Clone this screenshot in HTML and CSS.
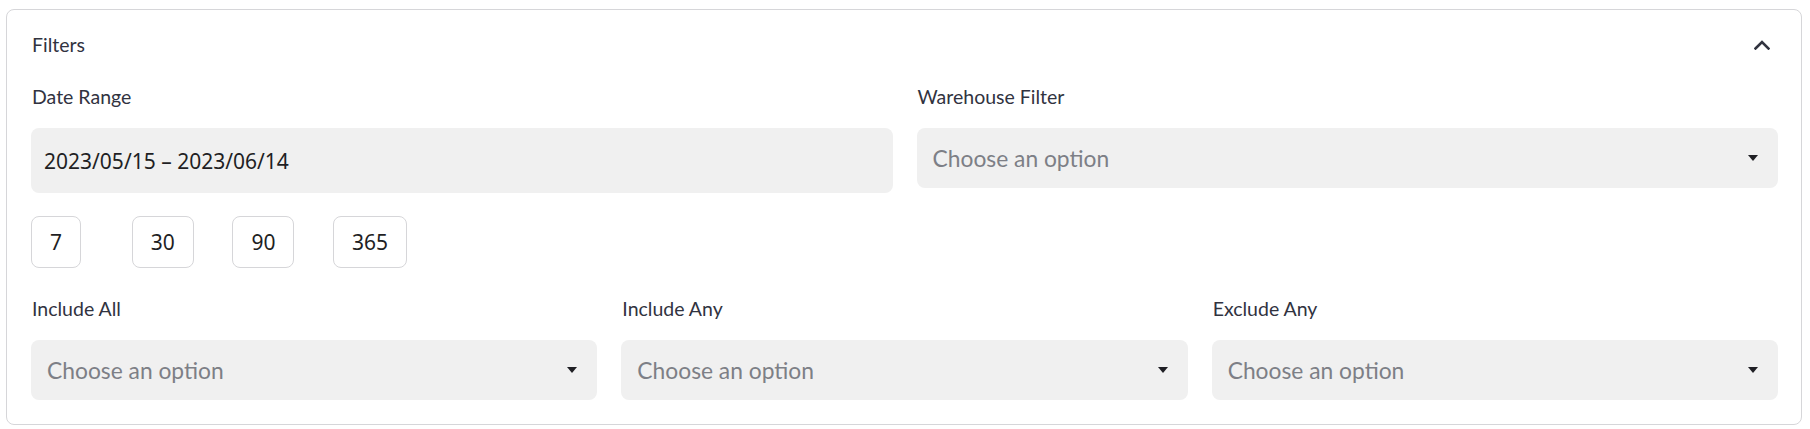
FILE: index.html
```html
<!DOCTYPE html>
<html lang="en">
<head>
<meta charset="utf-8">
<title>Filters</title>
<link rel="stylesheet" href="styles.css">
</head>
<body>
<section class="card">
  <header class="card-header">
    <span class="card-title">Filters</span>
    <svg class="chevron" width="16" height="10" viewBox="0 0 16 10" aria-hidden="true">
      <polyline points="1.5,8.5 8,2 14.5,8.5" fill="none" stroke="#31333f" stroke-width="2.6" stroke-linecap="square"/>
    </svg>
  </header>
  <div class="card-body">
    <div class="row two">
      <div class="field">
        <label class="label">Date Range</label>
        <div class="date-input">2023/05/15 – 2023/06/14</div>
        <div class="quick">
          <button class="btn">7</button>
          <button class="btn">30</button>
          <button class="btn">90</button>
          <button class="btn">365</button>
        </div>
      </div>
      <div class="field">
        <label class="label">Warehouse Filter</label>
        <div class="select"><span class="placeholder">Choose an option</span><span class="caret"></span></div>
      </div>
    </div>
    <div class="row three">
      <div class="field">
        <label class="label">Include All</label>
        <div class="select"><span class="placeholder">Choose an option</span><span class="caret"></span></div>
      </div>
      <div class="field">
        <label class="label">Include Any</label>
        <div class="select"><span class="placeholder">Choose an option</span><span class="caret"></span></div>
      </div>
      <div class="field">
        <label class="label">Exclude Any</label>
        <div class="select"><span class="placeholder">Choose an option</span><span class="caret"></span></div>
      </div>
    </div>
  </div>
</section>
</body>
</html>
```
FILE: styles.css
```css
* { box-sizing: border-box; }
html, body { margin: 0; padding: 0; background: #ffffff; }
body {
  font-family: Lato, "Noto Sans", sans-serif;
  color: #31333f;
}
.card {
  margin: 9px 8px 0 6px;
  border: 1px solid #d6d6d9;
  border-radius: 8px;
  height: 416px;
}
.card-header {
  display: flex;
  justify-content: space-between;
  align-items: center;
  height: 70px;
  padding: 0 31px 0 25px;
}
.card-title {
  font-size: 19.5px;
  line-height: 26px;
}
.chevron { display: block; }
.card-body {
  padding: 4px 23px 0 24px;
}
.row {
  display: grid;
  column-gap: 24px;
}
.row.two { grid-template-columns: 1fr 1fr; }
.row.three { grid-template-columns: 1fr 1fr 1fr; margin-top: 28px; }
.field { display: flex; flex-direction: column; }
.label {
  font-size: 19.5px;
  line-height: 26px;
  height: 26px;
  margin-bottom: 18px;
  padding-left: 1px;
}
.date-input {
  height: 65px;
  background: #f0f0f0;
  border-radius: 8px;
  display: flex;
  align-items: center;
  padding-left: 13px;
  font-family: "Noto Sans", sans-serif;
  font-size: 21px;
  color: #1f1f24;
}
.quick {
  display: grid;
  grid-template-columns: repeat(4, 76.7px);
  column-gap: 24px;
  margin-top: 23px;
  justify-items: start;
}
.btn {
  height: 52px;
  padding: 0 18px;
  background: #ffffff;
  border: 1px solid #d6d6d9;
  border-radius: 8px;
  font-family: "Noto Sans", sans-serif;
  font-size: 21px;
  color: #1f1f24;
}
.select {
  height: 60px;
  background: #f0f0f0;
  border-radius: 8px;
  display: flex;
  align-items: center;
  justify-content: space-between;
  padding: 0 20px 0 16px;
}
.placeholder {
  font-size: 22.8px;
  color: #7d7f86;
}
.caret {
  width: 0;
  height: 0;
  border-left: 5.5px solid transparent;
  border-right: 5.5px solid transparent;
  border-top: 6px solid #1f1f24;
}
```
